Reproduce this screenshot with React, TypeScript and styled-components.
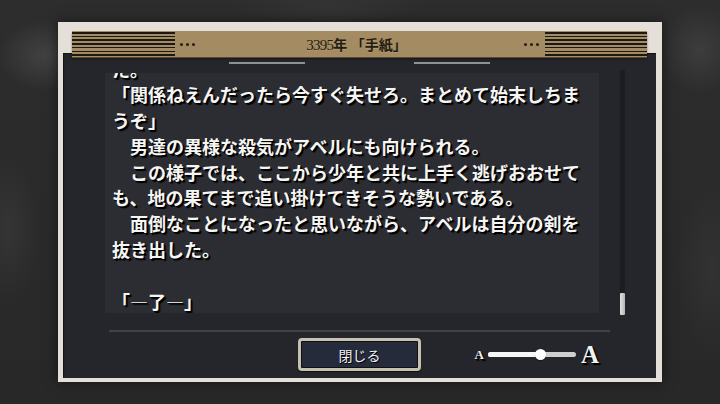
import React, { useLayoutEffect, useRef } from "react";
import styled, { createGlobalStyle } from "styled-components";

const Global = createGlobalStyle`
  html, body { margin: 0; padding: 0; }
  body { width: 720px; height: 404px; overflow: hidden; background: #2a2a2a; }
`;

const Stage = styled.div`
  width: 720px;
  height: 404px;
  box-sizing: border-box;
  padding: 22px 58px;
  font-family: "Noto Sans CJK JP", sans-serif;
  background:
    radial-gradient(ellipse 60px 45px at 45px 55px, rgba(130,130,130,0.25), transparent 80%),
    radial-gradient(ellipse 50px 55px at 700px 50px, rgba(120,120,120,0.22), transparent 80%),
    radial-gradient(ellipse 40px 90px at 8px 230px, rgba(95,95,95,0.2), transparent 80%),
    radial-gradient(ellipse 45px 110px at 712px 270px, rgba(90,90,90,0.18), transparent 80%),
    radial-gradient(ellipse 120px 30px at 330px 5px, rgba(80,80,80,0.2), transparent 80%),
    linear-gradient(#2d2d2d, #282828);
`;

const Frame = styled.div`
  height: 360px;
  box-sizing: border-box;
  display: flex;
  flex-direction: column;
  padding: 9px 6px 4px 5px;
  background: #e4dfd8;
  box-shadow: 0 0 12px rgba(0, 0, 0, 0.5);
`;

const Header = styled.div`
  position: relative;
  z-index: 1;
  margin: 0 9px -4px;
  height: 26px;
  display: grid;
  grid-template-columns: 103px auto 1fr auto 102px;
  align-items: center;
  background: #a48b62;
  box-shadow: 0 1px 0 #5a4a32, 0 2px 2px rgba(0, 0, 0, 0.45);
`;

const Stripes = styled.div`
  align-self: stretch;
  margin: 1px 0 1px;
  background: repeating-linear-gradient(
    to bottom,
    #1c1813 0 1.6px,
    #a48b62 1.6px 3.7px
  );
`;

const Dots = styled.div<{ $left?: boolean }>`
  display: flex;
  gap: 3px;
  margin: ${(p) => (p.$left ? "0 0 0 5px" : "0 6px 0 0")};
`;

const Dot = styled.span`
  width: 3px;
  height: 3px;
  border-radius: 50%;
  background: #241e15;
`;

const Title = styled.div`
  justify-self: center;
  margin-right: 6px;
  font-family: "Liberation Serif", "Noto Sans CJK JP", serif;
  font-size: 14px;
  font-weight: 700;
  color: #231c12;
  white-space: pre;
  text-shadow: 0 1px 0 rgba(255, 240, 210, 0.15);
`;

const Digits = styled.span`
  font-size: 15px;
  font-weight: 400;
  letter-spacing: -0.8px;
`;

const Panel = styled.div`
  flex: 1;
  display: flex;
  flex-direction: column;
  padding: 9px 0 7px;
  background: #25262b;
  box-shadow: inset 1px 1px 1px rgba(0, 0, 0, 0.5);
`;

const Marks = styled.div`
  display: flex;
  justify-content: center;
  gap: 109px;
  height: 2px;
`;

const Mark = styled.span`
  width: 76px;
  height: 1.5px;
  background: #8e9094;
`;

const BodyRow = styled.div`
  margin-top: 6px;
  height: 245px;
  display: flex;
  align-items: center;
  gap: 21.4px;
  padding-left: 41.6px;
`;

const TextBox = styled.div`
  width: 494px;
  height: 240px;
  box-sizing: border-box;
  padding: 0 16px 20px 7.4px;
  overflow: hidden;
  background: #2c2d33;
  color: #f5f5f3;
  font-size: 18px;
  font-weight: 700;
  text-shadow: 1px 1px 0 #000, 2px 2px 1px #000;
`;

const Line = styled.div`
  height: 25.8px;
  line-height: 25.8px;
  white-space: pre;
`;

const ScrollTrack = styled.div`
  width: 5px;
  height: 245px;
  display: flex;
  flex-direction: column;
  justify-content: flex-end;
  background: #1c1d21;
`;

const ScrollThumb = styled.div`
  height: 22px;
  border-radius: 1px;
  background: linear-gradient(to right, #e2e2e2, #b5b5b5);
`;

const Divider = styled.div`
  margin: 14.5px 46px 0 45.7px;
  height: 2px;
  background: #3d424c;
`;

const Footer = styled.div`
  margin-top: 6.5px;
  height: 33px;
  display: grid;
  grid-template-columns: 1fr auto 1fr;
  align-items: center;
  padding: 0 57px;
`;

const CloseButton = styled.button`
  grid-column: 2;
  width: 123px;
  height: 33px;
  box-sizing: border-box;
  border: 3px solid #c6c1b1;
  border-radius: 4px;
  background: #252b3a;
  box-shadow: inset 0 0 0 1px #0e1016, 0 1px 1px rgba(0, 0, 0, 0.6);
  color: #eef0f4;
  font-family: "Noto Sans CJK JP", sans-serif;
  font-size: 14px;
  text-shadow: 1px 1px 0 #000;
  padding: 0;
`;

const SizeControl = styled.div`
  grid-column: 3;
  justify-self: end;
  display: flex;
  align-items: center;
  gap: 4px;
`;

const Glyph = styled.span<{ $size: number }>`
  font-family: "Liberation Serif", serif;
  font-weight: 700;
  font-size: ${(p) => p.$size}px;
  line-height: 1;
  color: #f2f2f2;
  text-shadow: 1px 1px 0 #000, 2px 2px 1px #000;
`;

const Track = styled.div`
  position: relative;
  width: 88px;
  height: 5px;
  margin-right: 1px;
  border-radius: 3px;
  background: #cfcfcf;
`;

const Fill = styled.div`
  height: 100%;
  border-radius: 3px;
  background: #f6f6f6;
`;

const Knob = styled.div`
  position: absolute;
  top: 50%;
  width: 11px;
  height: 11px;
  margin: -5.5px 0 0 -5.5px;
  border-radius: 50%;
  background: #ffffff;
  box-shadow: 0 1px 1px rgba(0, 0, 0, 0.4);
`;

const lines = [
  "た。",
  "「関係ねえんだったら今すぐ失せろ。まとめて始末しちま",
  "うぞ」",
  "　男達の異様な殺気がアベルにも向けられる。",
  "　この様子では、ここから少年と共に上手く逃げおおせて",
  "も、地の果てまで追い掛けてきそうな勢いである。",
  "　面倒なことになったと思いながら、アベルは自分の剣を",
  "抜き出した。",
  " ",
  "「―了―」",
];

export default function App() {
  const boxRef = useRef<HTMLDivElement>(null);
  const fontLevel = 0.6;

  useLayoutEffect(() => {
    if (boxRef.current) boxRef.current.scrollTop = 16;
  }, []);

  return (
    <>
      <Global />
      <Stage>
        <Frame>
          <Header>
            <Stripes />
            <Dots $left>
              <Dot />
              <Dot />
              <Dot />
            </Dots>
            <Title>
              <Digits>3395</Digits>年 「手紙」
            </Title>
            <Dots>
              <Dot />
              <Dot />
              <Dot />
            </Dots>
            <Stripes />
          </Header>
          <Panel>
            <Marks>
              <Mark />
              <Mark />
            </Marks>
            <BodyRow>
              <TextBox ref={boxRef}>
                {lines.map((l, i) => (
                  <Line key={i}>{l}</Line>
                ))}
              </TextBox>
              <ScrollTrack>
                <ScrollThumb />
              </ScrollTrack>
            </BodyRow>
            <Divider />
            <Footer>
              <CloseButton>閉じる</CloseButton>
              <SizeControl>
                <Glyph $size={13}>A</Glyph>
                <Track>
                  <Fill style={{ width: `${fontLevel * 100}%` }} />
                  <Knob style={{ left: `${fontLevel * 100}%` }} />
                </Track>
                <Glyph $size={25}>A</Glyph>
              </SizeControl>
            </Footer>
          </Panel>
        </Frame>
      </Stage>
    </>
  );
}
